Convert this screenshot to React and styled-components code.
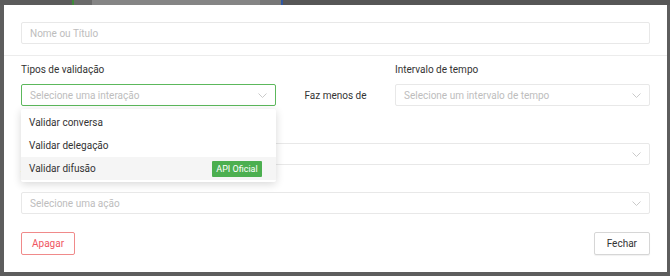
import React from "react";
import styled, { createGlobalStyle } from "styled-components";

const GlobalStyle = createGlobalStyle`
  html, body {
    margin: 0;
    padding: 0;
    background: #5d5d5d;
  }
  body {
    font-family: Roboto, "Liberation Sans", sans-serif;
  }
  * {
    box-sizing: border-box;
  }
`;

const Screen = styled.div`
  position: relative;
  width: 670px;
  height: 276px;
  background: #5d5d5d;
  padding: 5px 3px 4px 4px;
  overflow: hidden;
`;

const BehindStrip = styled.div`
  position: absolute;
  top: 0;
  left: 0;
  right: 0;
  height: 5px;
  display: flex;
`;

const BehindPart = styled.div`
  width: ${(p) => p.$w}px;
  flex: ${(p) => (p.$grow ? 1 : "none")};
  background: ${(p) => p.$bg};
  border-left: ${(p) => (p.$line ? `2px solid ${p.$line}` : "none")};
`;

const Modal = styled.div`
  position: relative;
  background: #fff;
  height: 267px;
  display: flex;
  flex-direction: column;
`;

const Header = styled.div`
  padding: 17px 17px 11px;
  border-bottom: 1px solid #ececec;
`;

const Body = styled.div`
  padding: 7px 17px 16px;
  display: flex;
  flex-direction: column;
`;

const Field = styled.div`
  height: 22px;
  border: 1px solid ${(p) => (p.$focused ? "#5cb85c" : "#e8e8e8")};
  border-radius: 2px;
  display: flex;
  align-items: center;
  padding: 0 8px;
  font-size: 10px;
  color: #bdbdbd;
  background: #fff;
`;

const FieldText = styled.span`
  flex: 1;
  white-space: nowrap;
`;

const Label = styled.div`
  font-size: 10px;
  height: 14px;
  line-height: 14px;
  color: #333;
  margin: ${(p) => p.$top || 0}px 0 ${(p) => p.$bottom ?? 7}px;
`;

const TopRow = styled.div`
  display: grid;
  grid-template-columns: 255px 1fr 255px;
  align-items: end;
`;

const Column = styled.div`
  position: relative;
  display: flex;
  flex-direction: column;
`;

const Middle = styled.div`
  height: 22px;
  display: flex;
  align-items: center;
  justify-content: center;
  font-size: 10px;
  color: #333;
`;

const Menu = styled.div`
  position: absolute;
  top: calc(100% + 3px);
  left: 0;
  right: 0;
  background: #fff;
  padding: 2px 0;
  box-shadow: 0 2px 8px rgba(0, 0, 0, 0.16);
  border-radius: 2px;
  z-index: 5;
`;

const MenuItem = styled.div`
  height: 23px;
  display: flex;
  align-items: center;
  justify-content: space-between;
  padding: 0 14px 0 8px;
  font-size: 10px;
  color: #333;
  background: ${(p) => (p.$active ? "#f5f5f5" : "transparent")};
`;

const Badge = styled.span`
  width: 50px;
  height: 16px;
  display: flex;
  align-items: center;
  justify-content: center;
  background: #4caf50;
  color: #fff;
  font-size: 9px;
  border-radius: 1px;
`;

const Footer = styled.div`
  display: flex;
  justify-content: space-between;
  margin-top: 18px;
`;

const Button = styled.button`
  height: 23px;
  padding: 0 ${(p) => (p.$danger ? 10 : 12)}px;
  background: #fff;
  border: 1px solid ${(p) => (p.$danger ? "#f08a8a" : "#d6d6d6")};
  color: ${(p) => (p.$danger ? "#f0555f" : "#333")};
  border-radius: 2px;
  font-family: Roboto, "Liberation Sans", sans-serif;
  font-size: 10px;
  box-shadow: ${(p) => (p.$danger ? "none" : "0 1px 1px rgba(0,0,0,0.06)")};
`;

const Chevron = () => (
  <svg width="9" height="5" viewBox="0 0 9 5" fill="none">
    <polyline points="0.5,0.5 4.5,4.5 8.5,0.5" stroke="#c4c4c4" strokeWidth="0.9" />
  </svg>
);

const Select = ({ placeholder, focused }) => (
  <Field $focused={focused}>
    <FieldText>{placeholder}</FieldText>
    <Chevron />
  </Field>
);

const options = [
  { label: "Validar conversa" },
  { label: "Validar delegação" },
  { label: "Validar difusão", badge: "API Oficial", active: true },
];

export default function App() {
  return (
    <>
      <GlobalStyle />
      <Screen>
        <BehindStrip>
          <BehindPart $w={72} $bg="#5b5b5b" />
          <BehindPart $w={20} $bg="#6a6a6a" $line="#3f8a3a" />
          <BehindPart $w={168} $bg="#858585" />
          <BehindPart $w={21} $bg="#777" />
          <BehindPart $grow $bg="#565656" $line="#2f56a0" />
        </BehindStrip>
        <Modal>
          <Header>
            <Field>
              <FieldText>Nome ou Título</FieldText>
            </Field>
          </Header>
          <Body>
            <TopRow>
              <Column>
                <Label>Tipos de validação</Label>
                <Select placeholder="Selecione uma interação" focused />
                <Menu>
                  {options.map((o) => (
                    <MenuItem key={o.label} $active={o.active}>
                      <span>{o.label}</span>
                      {o.badge && <Badge>{o.badge}</Badge>}
                    </MenuItem>
                  ))}
                </Menu>
              </Column>
              <Middle>Faz menos de</Middle>
              <Column>
                <Label>Intervalo de tempo</Label>
                <Select placeholder="Selecione um intervalo de tempo" />
              </Column>
            </TopRow>
            <Label $top={16} />
            <Select placeholder="" />
            <Label $top={4} $bottom={9}>Tipo de ação</Label>
            <Select placeholder="Selecione uma ação" />
            <Footer>
              <Button $danger>Apagar</Button>
              <Button>Fechar</Button>
            </Footer>
          </Body>
        </Modal>
      </Screen>
    </>
  );
}
